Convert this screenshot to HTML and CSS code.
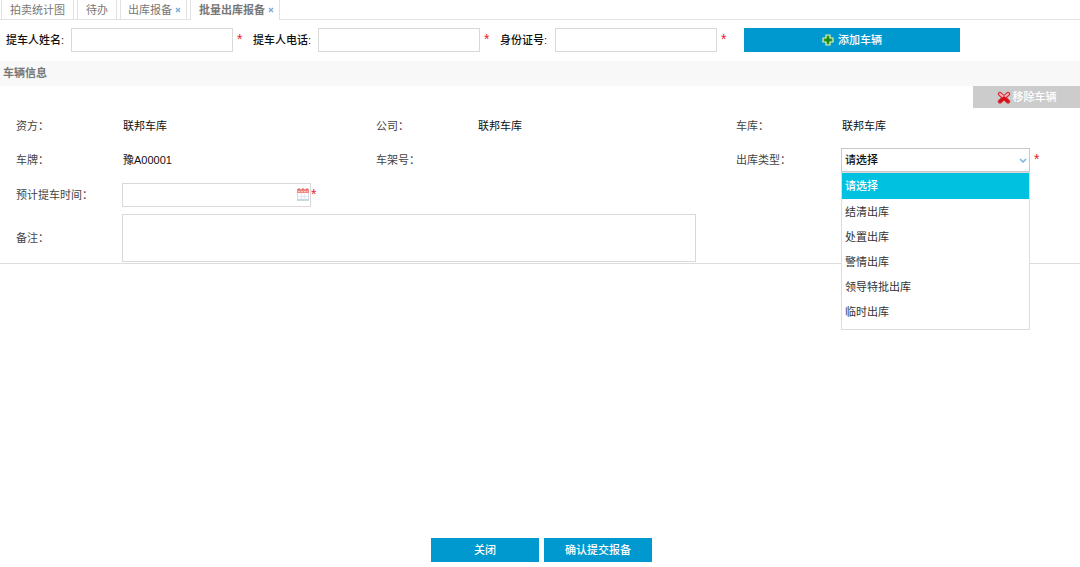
FILE: index.html
```html
<!DOCTYPE html>
<html lang="zh-CN">
<head>
<meta charset="utf-8">
<meta name="viewport" content="width=device-width, initial-scale=1">
<title>批量出库报备</title>
<link rel="stylesheet" href="styles.css">
</head>
<body>
<div class="page">
  <nav class="tabs">
    <a class="tab" href="#stats">拍卖统计图</a>
    <a class="tab" href="#todo">待办</a>
    <a class="tab tab-closable" href="#report">出库报备<svg class="tab-close" viewBox="0 0 6 6"><path d="M1 1l4 4M5 1l-4 4"/></svg></a>
    <a class="tab tab-closable tab-active" href="#batch">批量出库报备<svg class="tab-close" viewBox="0 0 6 6"><path d="M1 1l4 4M5 1l-4 4"/></svg></a>
  </nav>

  <form class="person">
    <div class="person-field">
      <label class="person-label" for="name">提车人姓名:</label>
      <input class="box" id="name" type="text"><span class="star">*</span>
    </div>
    <div class="person-field">
      <label class="person-label" for="phone">提车人电话:</label>
      <input class="box" id="phone" type="text"><span class="star">*</span>
    </div>
    <div class="person-field">
      <label class="person-label person-label-short" for="idno">身份证号:</label>
      <input class="box" id="idno" type="text"><span class="star">*</span>
    </div>
    <button class="btn btn-add" type="button">
      <svg class="icon-add" viewBox="0 0 12 12"><path d="M4 1h4v3h3v4H8v3H4V8H1V4h3z" fill="#2f9a28" stroke="#e8f3ac" stroke-width="1.2" stroke-linejoin="round"/><path d="M6 3v6M3 6h6" stroke="#148020" stroke-width="1.2"/></svg>
      添加车辆
    </button>
  </form>

  <h2 class="section-title">车辆信息</h2>

  <section class="vehicle">
    <button class="btn-remove" type="button">
      <svg class="icon-remove" viewBox="0 0 14 13"><path d="M3 3l8 7.500M11 3l-8 7.500" stroke="#d1323a" stroke-width="4.400" stroke-linecap="round"/><path d="M3 3l3 2.600M11 3L8 5.600" stroke="#f5b5b8" stroke-width="2" stroke-linecap="round"/><path d="M3.500 10L7 6.800l3.500 3.200" fill="none" stroke="#dd0d16" stroke-width="2.600" stroke-linecap="round"/></svg>移除车辆
    </button>
    <div class="details">
      <span class="label">资方：</span><span class="value">联邦车库</span>
      <span class="label">公司：</span><span class="value">联邦车库</span>
      <span class="label">车库：</span><span class="value">联邦车库</span>

      <span class="label">车牌：</span><span class="value">豫A00001</span>
      <span class="label">车架号：</span><span class="value"></span>
      <label class="label" for="type">出库类型：</label>
      <div class="control">
        <div class="combo">
          <select class="combo-select" id="type">
            <option>请选择</option>
            <option>结清出库</option>
            <option>处置出库</option>
            <option>警情出库</option>
            <option>领导特批出库</option>
            <option>临时出库</option>
          </select>
          <svg class="combo-arrow" viewBox="0 0 8 5"><path d="M1 1l3 3 3-3"/></svg>
          <ul class="menu">
            <li class="menu-item menu-item-active">请选择</li>
            <li class="menu-item">结清出库</li>
            <li class="menu-item">处置出库</li>
            <li class="menu-item">警情出库</li>
            <li class="menu-item">领导特批出库</li>
            <li class="menu-item">临时出库</li>
          </ul>
        </div>
        <span class="star">*</span>
      </div>

      <label class="label" for="time">预计提车时间：</label>
      <div class="control control-wide">
        <div class="date">
          <input class="box date-input" id="time" type="text">
          <svg class="date-icon" viewBox="0 0 12 14"><path d="M.5 5v8h11V5" fill="#fbfbfd" stroke="#dcdce6"/><path d="M0 2h12v4H0z" fill="#f08984"/><path d="M2 1v2M6 1v2M10 1v2" stroke="#d95d5c"/><path d="M1 4.500h10" stroke="#fbc7c2" stroke-dasharray="2 1"/><path d="M4.500 7v5M7.500 7v5M1 9.500h10" stroke="#dfdfe6" stroke-width=".7"/><path d="M0 13h12" stroke="#a4c5d2"/></svg>
        </div>
        <span class="star star-tight">*</span>
      </div>

      <label class="label" for="note">备注：</label>
      <textarea class="box note" id="note"></textarea>
    </div>
  </section>

  <footer class="actions">
    <button class="btn" type="button">关闭</button>
    <button class="btn" type="button">确认提交报备</button>
  </footer>
</div>
</body>
</html>
```
FILE: styles.css
```css
* { box-sizing: border-box; }

body {
  margin: 0;
  background: #fff;
  color: #111;
  font: 11px/16px "Liberation Sans", "Noto Sans CJK SC", sans-serif;
}

button, input, select, textarea { font: inherit; margin: 0; }

.page {
  display: flex;
  flex-direction: column;
  min-height: 100vh;
}

.tabs {
  display: flex;
  gap: 3px;
  height: 20px;
  padding-left: 1px;
  border-bottom: 1px solid #e2e2e2;
}

.tab {
  display: flex;
  gap: 3px;
  height: 19px;
  padding: 2px 8px 0;
  border: solid #e2e2e2;
  border-width: 0 1px;
  color: #777;
  text-decoration: none;
}

.tab-closable { padding-right: 5px; padding-left: 7px; }

.tab-active {
  height: 20px;
  padding-left: 8px;
  background: #fff;
  font-weight: bold;
}

.tab-close {
  width: 6px;
  height: 6px;
  margin-top: 5px;
  fill: none;
  stroke: #79a9d6;
  stroke-width: 1.3;
}

.person {
  display: flex;
  padding: 8px 6px 9px;
}

.person-field {
  display: flex;
  align-items: center;
  margin-right: 10px;
}

.person-label { width: 65px; font-weight: 500; }
.person-label-short { width: 55px; }

.box {
  width: 162px;
  height: 24px;
  padding: 0 4px;
  border: 1px solid #d9d9d9;
  border-radius: 0;
  background: #fff;
  outline: 0;
}

.star {
  width: 6px;
  margin-left: 4px;
  padding-bottom: 2px;
  color: #e8202c;
  font-size: 14px;
}

.btn {
  display: flex;
  align-items: center;
  justify-content: center;
  gap: 4px;
  width: 108px;
  height: 24px;
  padding: 0;
  border: 0;
  background: #0099cf;
  color: #fff;
  font-weight: 500;
}

.btn-add { width: 216px; margin-left: 7px; }
.icon-add { width: 12px; height: 12px; }

.section-title {
  margin: 0;
  padding: 4px 3px;
  background: #f8f8f8;
  color: #777;
  font-size: 11px;
  line-height: 17px;
  font-weight: bold;
}

.vehicle {
  display: flex;
  flex-direction: column;
  border-bottom: 1px solid #ddd;
}

.btn-remove {
  display: flex;
  align-items: center;
  justify-content: center;
  align-self: flex-end;
  gap: 2px;
  width: 107px;
  height: 22px;
  padding: 0;
  border: 0;
  background: #ccc;
  color: #fff;
  font-weight: 500;
}

.icon-remove { width: 14px; height: 13px; fill: none; }

.details {
  display: grid;
  grid-template-columns: 106px 254fr 102px 258fr 105px 239fr;
  grid-template-rows: 35px 34px 35px 51px;
  align-items: center;
  padding-left: 16px;
}

.label { color: #444; }
.value { padding-left: 1px; }
.value:nth-of-type(4) { padding-left: 0; }

.control { display: flex; align-items: center; }
.control-wide { grid-column: 2 / -1; }

.combo { position: relative; width: 189px; }

.combo-select {
  display: block;
  width: 100%;
  height: 24px;
  padding: 0 3px;
  border: 1px solid #c8c8c8;
  border-radius: 0;
  background: #fff;
  color: #111;
  font-weight: 500;
  appearance: none;
  outline: 0;
}

.combo-arrow {
  position: absolute;
  top: 10px;
  right: 3px;
  width: 8px;
  height: 5px;
  fill: none;
  stroke: #7db8e4;
  stroke-width: 1.6;
  pointer-events: none;
}

.menu {
  position: absolute;
  top: 24px;
  left: 0;
  right: 0;
  margin: 0;
  padding: 0 0 5px;
  border: 1px solid #ddd;
  background: #fff;
  list-style: none;
}

.menu-item {
  padding: 1px 3px 0;
  color: #333;
  line-height: 24px;
}

.menu-item-active {
  padding-bottom: 1px;
  background: #00c1e0;
  color: #fff;
  font-weight: 500;
}

.date { position: relative; width: 189px; }
.date-input { display: block; width: 100%; }

.date-icon {
  position: absolute;
  top: 4px;
  right: 2px;
  width: 12px;
  height: 14px;
}

.star-tight { margin-left: 0; }

.note {
  grid-column: 2 / 5;
  width: 574px;
  max-width: 100%;
  height: 48px;
  resize: none;
}

.actions {
  display: flex;
  justify-content: center;
  gap: 5px;
  margin-top: auto;
  padding: 8px 0 5px 3px;
}
```
